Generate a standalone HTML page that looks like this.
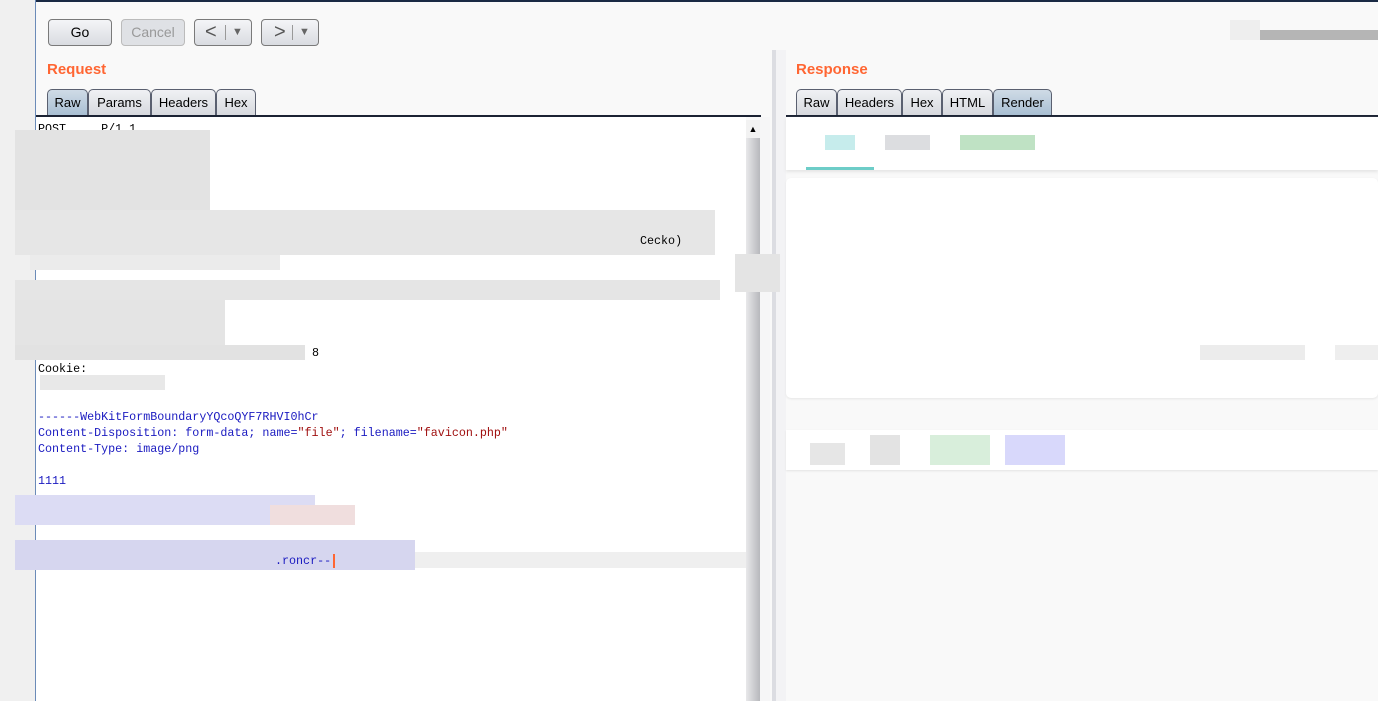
<!DOCTYPE html>
<html><head><meta charset="utf-8"><style>
*{margin:0;padding:0;box-sizing:border-box}
body{width:1378px;height:701px;overflow:hidden;background:#f9f9f9;font-family:"Liberation Sans",Arial,sans-serif;position:relative}
.a{position:absolute}
.btn{position:absolute;top:19px;height:27px;border:1px solid #7a7a7a;border-radius:4px;background:linear-gradient(#f4f5f7,#d9dce1);font-size:14px;text-align:center;line-height:25px;color:#000}
.tab{position:absolute;height:26px;border:1px solid #5a6070;border-bottom:none;border-radius:5px 5px 0 0;background:linear-gradient(#f0f1f4,#d7d9de);font-size:13px;line-height:25px;text-align:center}
.tab.s{background:linear-gradient(#cfdbe6,#a9bfd3)}
.title{position:absolute;color:#ff6633;font-weight:bold;font-size:15px}
.mono{position:absolute;left:38px;font-family:"Liberation Mono","Courier New",monospace;font-size:11.7px;line-height:16px;white-space:pre}
.g{position:absolute;background:#e2e2e2}
</style></head><body>
<div class="a" style="left:0;top:0;width:35px;height:701px;background:#f0f0f0"></div>
<div class="a" style="left:35px;top:0;width:1343px;height:2px;background:#1a2a44"></div>
<div class="a" style="left:35px;top:0;width:1px;height:701px;background:#6b8bb8"></div>

<div class="btn" style="left:48px;width:64px">Go</div>
<div class="btn" style="left:121px;width:64px;color:#999;border-color:#bbb;background:#dfe1e5">Cancel</div>
<div class="btn" style="left:194px;width:58px;color:#555;font-size:20px;text-align:left;padding-left:10px">&lt;<span style="position:absolute;left:30px;top:5px;height:15px;border-left:1px solid #999"></span><span style="position:absolute;left:37px;font-size:11px;color:#666">▼</span></div>
<div class="btn" style="left:261px;width:58px;color:#555;font-size:20px;text-align:left;padding-left:12px">&gt;<span style="position:absolute;left:30px;top:5px;height:15px;border-left:1px solid #999"></span><span style="position:absolute;left:37px;font-size:11px;color:#666">▼</span></div>
<div class="a" style="left:1245px;top:30px;width:133px;height:10px;background:#b5b5b5"></div>
<div class="a" style="left:1230px;top:20px;width:30px;height:20px;background:#eee"></div>

<div class="title" style="left:47px;top:61px">Request</div>
<div class="tab s" style="left:47px;top:89px;width:41px">Raw</div>
<div class="tab" style="left:88px;top:89px;width:63px">Params</div>
<div class="tab" style="left:151px;top:89px;width:65px">Headers</div>
<div class="tab" style="left:216px;top:89px;width:40px">Hex</div>
<div class="a" style="left:36px;top:115px;width:725px;height:2px;background:#1b2233"></div>
<div class="a" style="left:36px;top:117px;width:710px;height:584px;background:#fff"></div>
<div class="a" style="left:746px;top:120px;width:14px;height:581px;background:linear-gradient(90deg,#e8e8ea,#b7b8bc)"></div>
<div class="a" style="left:746px;top:120px;width:14px;height:18px;background:#f2f2f2;font-size:9px;text-align:center;line-height:18px">▲</div>
<div class="a" style="left:760px;top:117px;width:10px;height:584px;background:#f6f6f7"></div>
<div class="a" style="left:772px;top:50px;width:4px;height:651px;background:#dcdde2"></div>
<div class="a" style="left:776px;top:50px;width:10px;height:651px;background:#f3f3f5"></div>

<div class="a" style="left:36px;top:552px;width:710px;height:16px;background:#efefef"></div>
<div class="mono" style="top:121px;color:#000">POST     P/1.1</div>
<div class="g" style="left:15px;top:130px;width:195px;height:120px;background:#e3e3e3"></div>
<div class="g" style="left:15px;top:210px;width:700px;height:45px;background:#e6e6e6"></div>
<div class="mono" style="top:233px;left:640px;color:#000">Cecko)</div>
<div class="g" style="left:30px;top:255px;width:250px;height:15px;background:#ebebeb"></div>
<div class="g" style="left:15px;top:280px;width:705px;height:20px;background:#e5e5e5"></div>
<div class="g" style="left:735px;top:254px;width:45px;height:38px;background:#e4e4e4"></div>
<div class="g" style="left:15px;top:300px;width:210px;height:50px;background:#e4e4e4"></div>
<div class="g" style="left:15px;top:345px;width:290px;height:15px;background:#e2e2e2"></div>
<div class="mono" style="top:345px;left:312px;color:#000">8</div>
<div class="mono" style="top:361px;color:#000">Cookie:</div>
<div class="g" style="left:40px;top:375px;width:125px;height:15px;background:#e8e8e8"></div>
<div class="mono" style="top:409px;color:#1a1ac0">------WebKitFormBoundaryYQcoQYF7RHVI0hCr
Content-Disposition: form-data; name=<span style="color:#a01010">"file"</span>; filename=<span style="color:#a01010">"favicon.php"</span>
Content-Type: image/png

1111</div>
<div class="g" style="left:15px;top:495px;width:300px;height:30px;background:#dcdcf4"></div>
<div class="g" style="left:270px;top:505px;width:85px;height:20px;background:#f0dede"></div>
<div class="g" style="left:15px;top:540px;width:400px;height:30px;background:#d6d6ef"></div>
<div class="mono" style="top:553px;left:275px;color:#1a1ac0">.roncr--</div>
<div class="a" style="left:333px;top:554px;width:2px;height:14px;background:#ff6633"></div>

<div class="title" style="left:796px;top:61px">Response</div>
<div class="tab" style="left:796px;top:89px;width:41px">Raw</div>
<div class="tab" style="left:837px;top:89px;width:65px">Headers</div>
<div class="tab" style="left:902px;top:89px;width:40px">Hex</div>
<div class="tab" style="left:942px;top:89px;width:51px">HTML</div>
<div class="tab s" style="left:993px;top:89px;width:59px">Render</div>
<div class="a" style="left:786px;top:115px;width:592px;height:2px;background:#1b2233"></div>
<div class="a" style="left:786px;top:117px;width:592px;height:53px;background:#fff;box-shadow:0 2px 3px #e5e5e5"></div>
<div class="a" style="left:825px;top:135px;width:30px;height:15px;background:#c6ecec"></div>
<div class="a" style="left:885px;top:135px;width:45px;height:15px;background:#dcdde0"></div>
<div class="a" style="left:960px;top:135px;width:75px;height:15px;background:#bfe2c4"></div>
<div class="a" style="left:806px;top:167px;width:68px;height:3px;background:#6dcdc8"></div>
<div class="a" style="left:786px;top:178px;width:592px;height:220px;background:#fff;border-radius:5px;box-shadow:0 1px 2px #e5e5e5"></div>
<div class="a" style="left:1200px;top:345px;width:105px;height:15px;background:#ececec"></div>
<div class="a" style="left:1335px;top:345px;width:43px;height:15px;background:#eeeeee"></div>
<div class="a" style="left:786px;top:430px;width:592px;height:40px;background:#fff;box-shadow:0 1px 2px #e3e3e3"></div>
<div class="a" style="left:810px;top:443px;width:35px;height:22px;background:#e6e6e6"></div>
<div class="a" style="left:870px;top:435px;width:30px;height:30px;background:#e3e3e3"></div>
<div class="a" style="left:930px;top:435px;width:60px;height:30px;background:#d8eedb"></div>
<div class="a" style="left:1005px;top:435px;width:60px;height:30px;background:#d8d8fb"></div>
</body></html>
